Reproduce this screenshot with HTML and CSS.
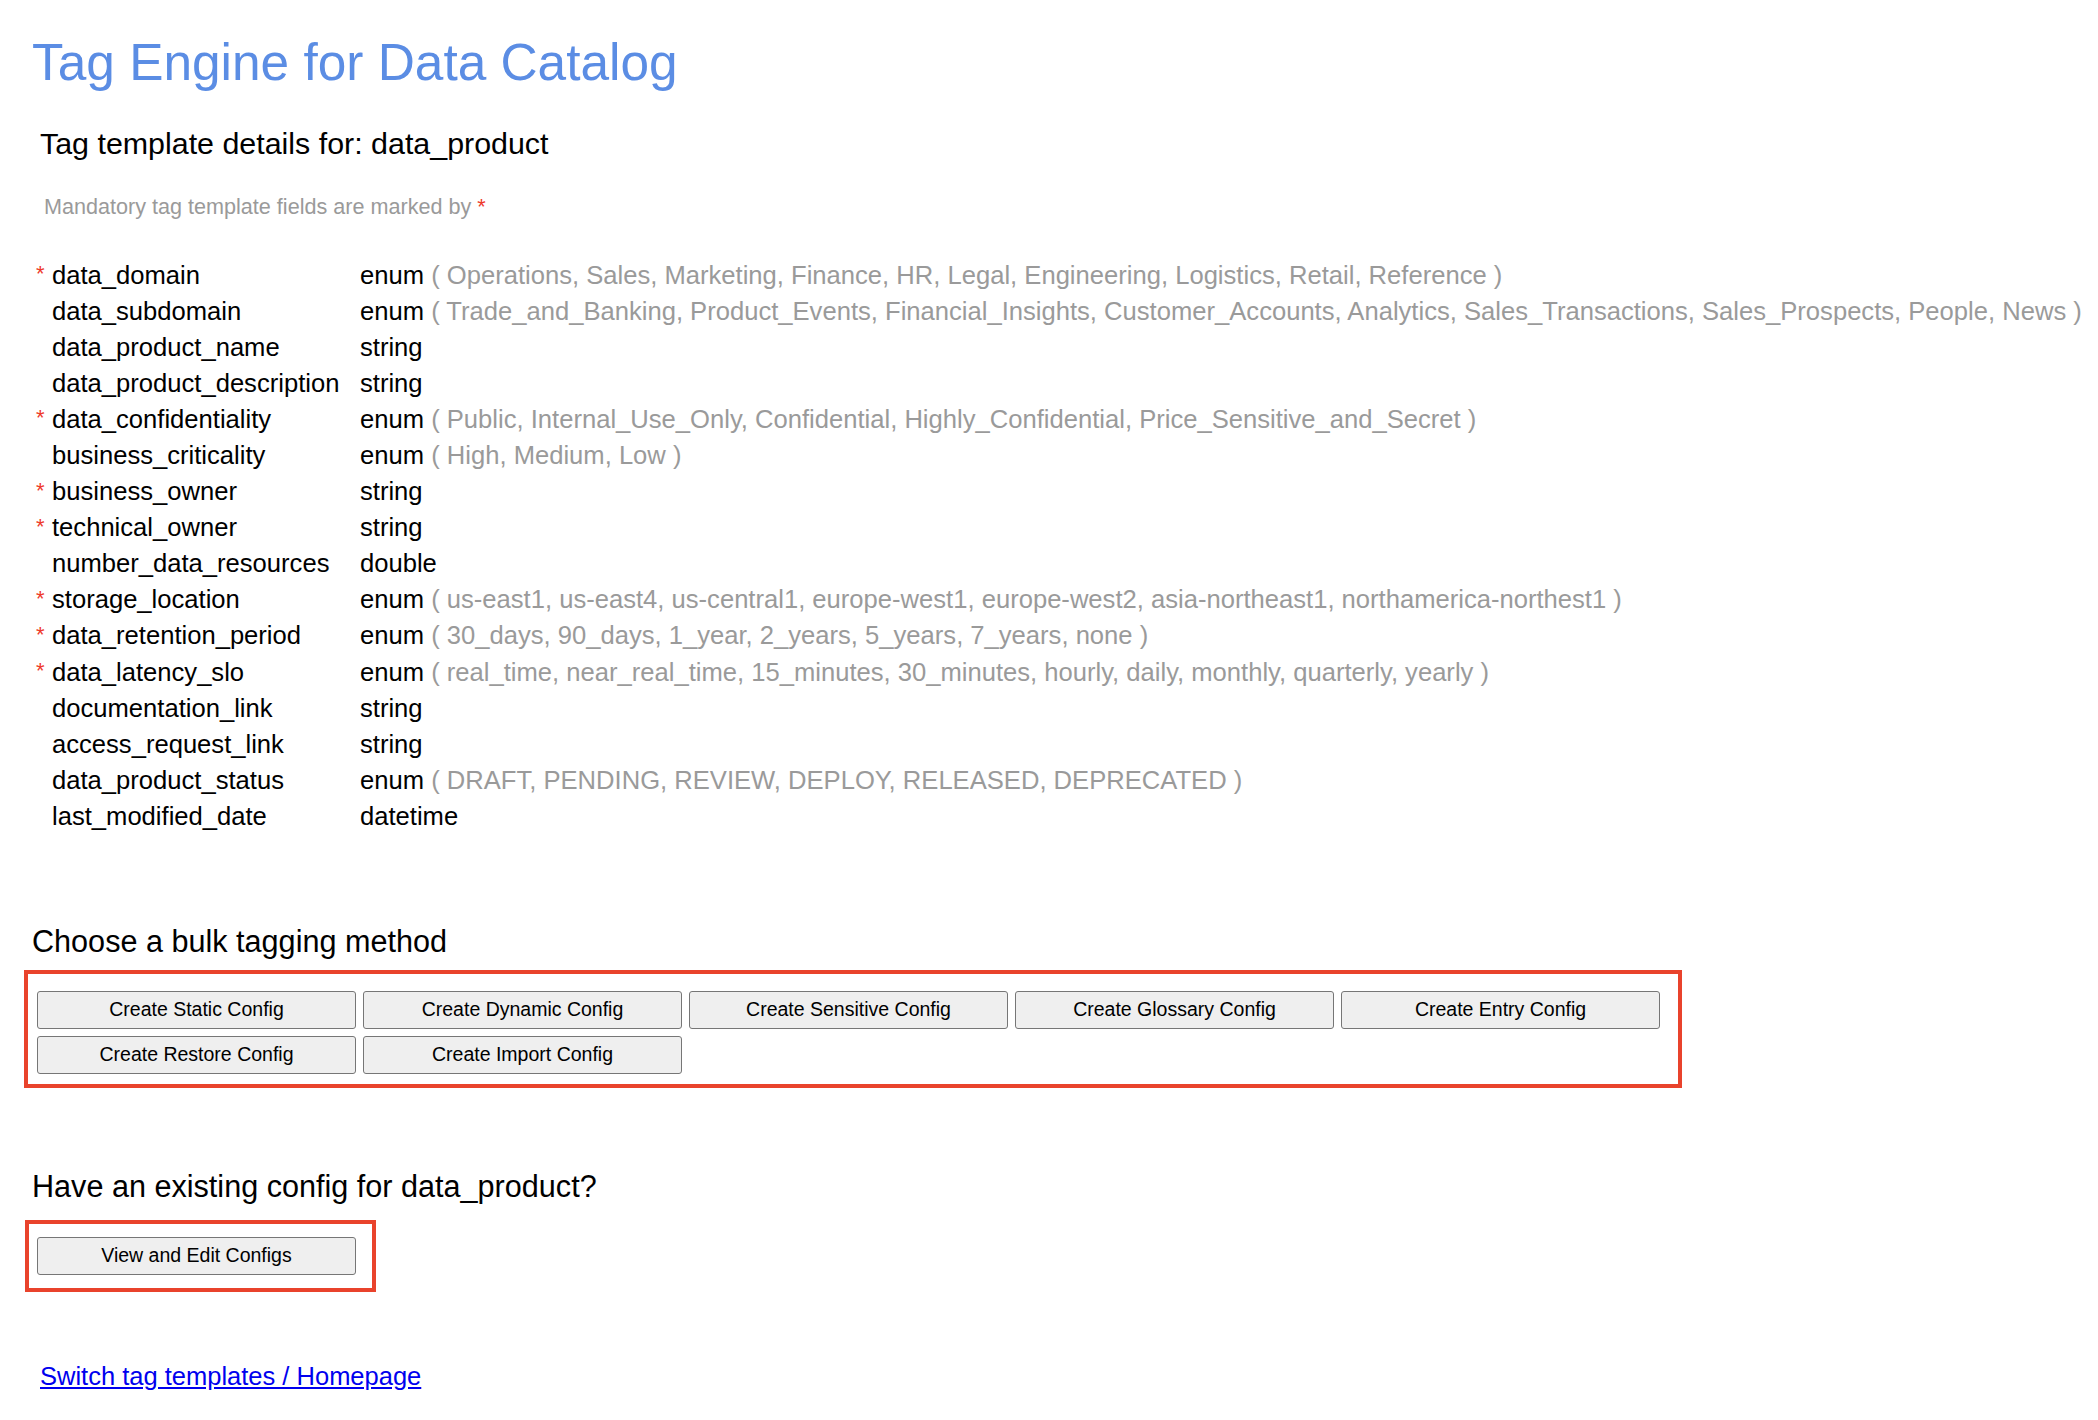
FILE: index.html
```html
<!DOCTYPE html>
<html>
<head>
<meta charset="utf-8">
<title>Tag Engine for Data Catalog</title>
<link rel="stylesheet" href="styles.css">
</head>
<body>
<div class="page">
  <h1 class="title">Tag Engine for Data Catalog</h1>
  <h2 class="subtitle">Tag template details for: data_product</h2>
  <p class="note">Mandatory tag template fields are marked by <span class="req">*</span></p>

  <div class="fields">
    <div class="row"><span class="req">*</span><span class="name">data_domain</span><span class="type">enum <span class="vals">( Operations, Sales, Marketing, Finance, HR, Legal, Engineering, Logistics, Retail, Reference )</span></span></div>
    <div class="row"><span class="req"></span><span class="name">data_subdomain</span><span class="type">enum <span class="vals">( Trade_and_Banking, Product_Events, Financial_Insights, Customer_Accounts, Analytics, Sales_Transactions, Sales_Prospects, People, News )</span></span></div>
    <div class="row"><span class="req"></span><span class="name">data_product_name</span><span class="type">string</span></div>
    <div class="row"><span class="req"></span><span class="name">data_product_description</span><span class="type">string</span></div>
    <div class="row"><span class="req">*</span><span class="name">data_confidentiality</span><span class="type">enum <span class="vals">( Public, Internal_Use_Only, Confidential, Highly_Confidential, Price_Sensitive_and_Secret )</span></span></div>
    <div class="row"><span class="req"></span><span class="name">business_criticality</span><span class="type">enum <span class="vals">( High, Medium, Low )</span></span></div>
    <div class="row"><span class="req">*</span><span class="name">business_owner</span><span class="type">string</span></div>
    <div class="row"><span class="req">*</span><span class="name">technical_owner</span><span class="type">string</span></div>
    <div class="row"><span class="req"></span><span class="name">number_data_resources</span><span class="type">double</span></div>
    <div class="row"><span class="req">*</span><span class="name">storage_location</span><span class="type">enum <span class="vals">( us-east1, us-east4, us-central1, europe-west1, europe-west2, asia-northeast1, northamerica-northest1 )</span></span></div>
    <div class="row"><span class="req">*</span><span class="name">data_retention_period</span><span class="type">enum <span class="vals">( 30_days, 90_days, 1_year, 2_years, 5_years, 7_years, none )</span></span></div>
    <div class="row"><span class="req">*</span><span class="name">data_latency_slo</span><span class="type">enum <span class="vals">( real_time, near_real_time, 15_minutes, 30_minutes, hourly, daily, monthly, quarterly, yearly )</span></span></div>
    <div class="row"><span class="req"></span><span class="name">documentation_link</span><span class="type">string</span></div>
    <div class="row"><span class="req"></span><span class="name">access_request_link</span><span class="type">string</span></div>
    <div class="row"><span class="req"></span><span class="name">data_product_status</span><span class="type">enum <span class="vals">( DRAFT, PENDING, REVIEW, DEPLOY, RELEASED, DEPRECATED )</span></span></div>
    <div class="row"><span class="req"></span><span class="name">last_modified_date</span><span class="type">datetime</span></div>
  </div>

  <h3 class="section">Choose a bulk tagging method</h3>
  <div class="box methods">
    <button class="btn">Create Static Config</button>
    <button class="btn">Create Dynamic Config</button>
    <button class="btn">Create Sensitive Config</button>
    <button class="btn">Create Glossary Config</button>
    <button class="btn">Create Entry Config</button>
    <button class="btn">Create Restore Config</button>
    <button class="btn">Create Import Config</button>
  </div>

  <h3 class="section existing">Have an existing config for data_product?</h3>
  <div class="box single">
    <button class="btn">View and Edit Configs</button>
  </div>

  <a class="homelink" href="#">Switch tag templates / Homepage</a>
</div>
</body>
</html>
```
FILE: styles.css
```css
html, body {
  margin: 0;
  padding: 0;
  background: #ffffff;
}

body {
  font-family: "Liberation Sans", Arial, Helvetica, sans-serif;
  color: #000000;
}

.page {
  display: flex;
  flex-direction: column;
  align-items: flex-start;
  padding: 32px 0 40px 32px;
}

.title {
  margin: 0;
  font-size: 51.4px;
  line-height: 60px;
  font-weight: normal;
  color: #5b8de4;
}

.subtitle {
  margin: 33px 0 0 8px;
  font-size: 30.4px;
  line-height: 36px;
  font-weight: normal;
}

.note {
  margin: 33px 0 0 12px;
  font-size: 21.6px;
  line-height: 26px;
  color: #9a9a9a;
}

.req {
  color: #ee3a2c;
}

.fields {
  margin: 37px 0 0 4px;
  display: flex;
  flex-direction: column;
}

.row {
  display: grid;
  grid-template-columns: 16px 308px auto;
  height: 36.1px;
  align-items: center;
  font-size: 25.6px;
  white-space: nowrap;
}

.row .req {
  font-size: 22px;
  align-self: start;
  padding-top: 4px;
}

.vals {
  color: #9a9a9a;
}

.section {
  margin: 88px 0 0 0;
  font-size: 30.6px;
  line-height: 36px;
  font-weight: normal;
}

.section.existing {
  margin-top: 80px;
}

.box {
  border: 4px solid #e9432c;
  margin: 11px 0 0 -8px;
}

.methods {
  display: grid;
  grid-template-columns: repeat(5, 319px);
  gap: 7px;
  padding: 17px 18px 10px 9px;
}

.single {
  margin-top: 16px;
  margin-left: -7px;
  padding: 13px 16px 13px 8px;
  display: flex;
}

.btn {
  width: 319px;
  height: 38px;
  font-family: "Liberation Sans", Arial, Helvetica, sans-serif;
  font-size: 19.5px;
  color: #000000;
  background: #efefef;
  border: 1px solid #767676;
  border-radius: 3px;
  padding: 0;
}

.homelink {
  margin: 69px 0 0 8px;
  font-size: 25.5px;
  line-height: 30px;
  color: #0000ee;
  text-decoration: underline;
}
```
